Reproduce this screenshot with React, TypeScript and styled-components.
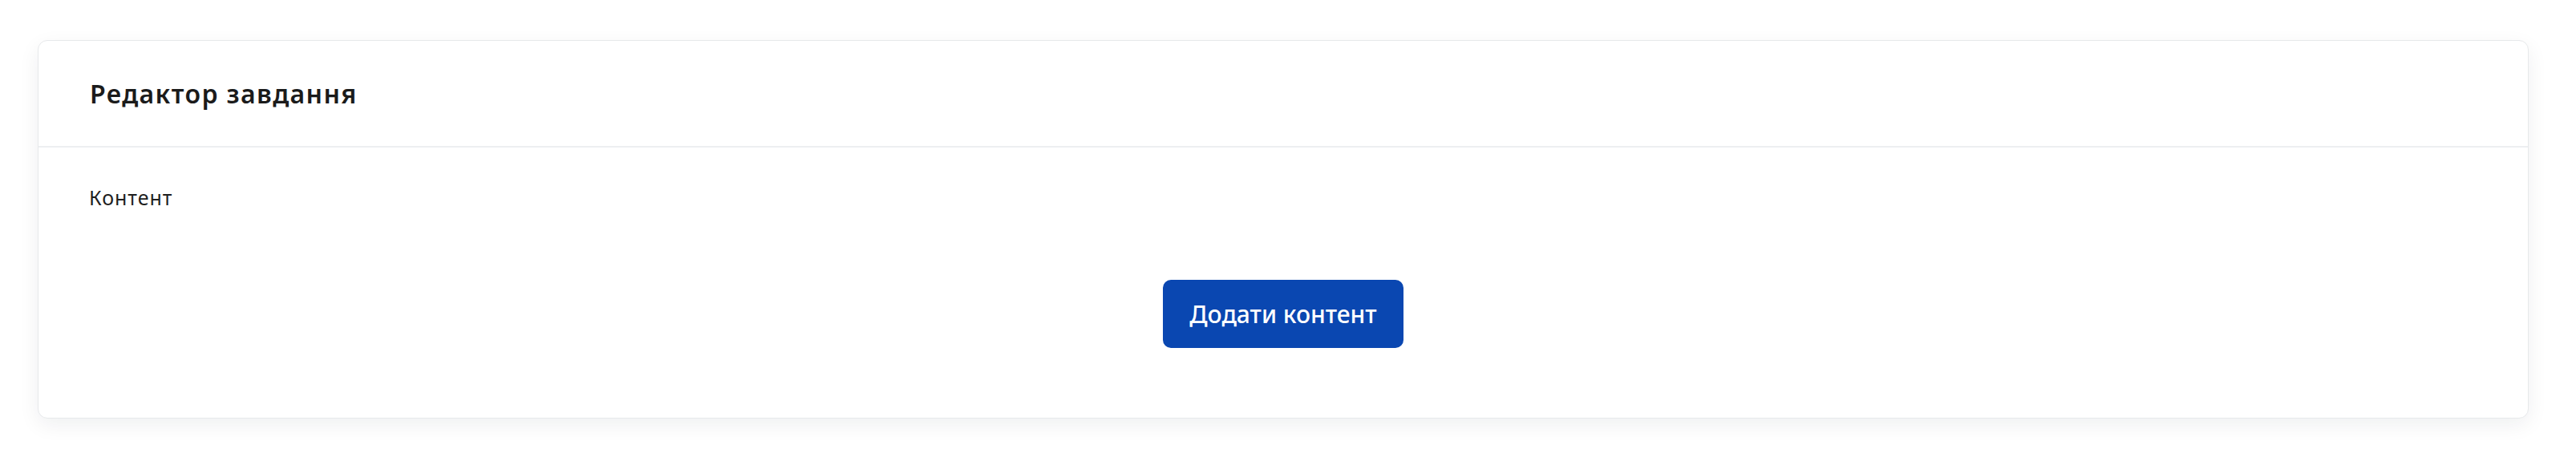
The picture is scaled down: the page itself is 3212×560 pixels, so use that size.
import React from "react";
import styled, { createGlobalStyle } from "styled-components";

const GlobalStyle = createGlobalStyle`
  html, body {
    margin: 0;
    padding: 0;
    background: #ffffff;
  }
  body {
    font-family: "Noto Sans", "Open Sans", sans-serif;
    color: #1c1c1c;
  }
`;

const Page = styled.div`
  padding: 50px 59px 40px 47px;
`;

const Card = styled.section`
  background: #ffffff;
  border: 1px solid #e7e9eb;
  border-radius: 12px;
  box-shadow: 0 8px 26px rgba(20, 30, 40, 0.065);
  overflow: hidden;
`;

const CardHeader = styled.header`
  height: 133px;
  display: flex;
  align-items: center;
  padding: 0 64px;
  border-bottom: 2px solid #edeff1;
  box-sizing: border-box;
`;

const Title = styled.h2`
  margin: 0;
  font-size: 32px;
  font-weight: 600;
  color: #1b1b1b;
  letter-spacing: 1.4px;
`;

const CardBody = styled.div`
  padding: 44px 63px 87px;
  display: flex;
  flex-direction: column;
`;

const Label = styled.div`
  font-size: 25px;
  line-height: 36px;
  color: #1f1f1f;
  letter-spacing: 1px;
`;

const Actions = styled.div`
  display: flex;
  justify-content: center;
  margin-top: 85px;
`;

const PrimaryButton = styled.button`
  width: 300px;
  height: 85px;
  padding: 0;
  border: none;
  border-radius: 10px;
  background: #0a47b1;
  color: #ffffff;
  font-family: "Noto Sans", "Open Sans", sans-serif;
  font-size: 30px;
  font-weight: 500;
  cursor: pointer;
`;

export default function App() {
  return (
    <>
      <GlobalStyle />
      <Page>
        <Card>
          <CardHeader>
            <Title>Редактор завдання</Title>
          </CardHeader>
          <CardBody>
            <Label>Контент</Label>
            <Actions>
              <PrimaryButton type="button">Додати контент</PrimaryButton>
            </Actions>
          </CardBody>
        </Card>
      </Page>
    </>
  );
}
